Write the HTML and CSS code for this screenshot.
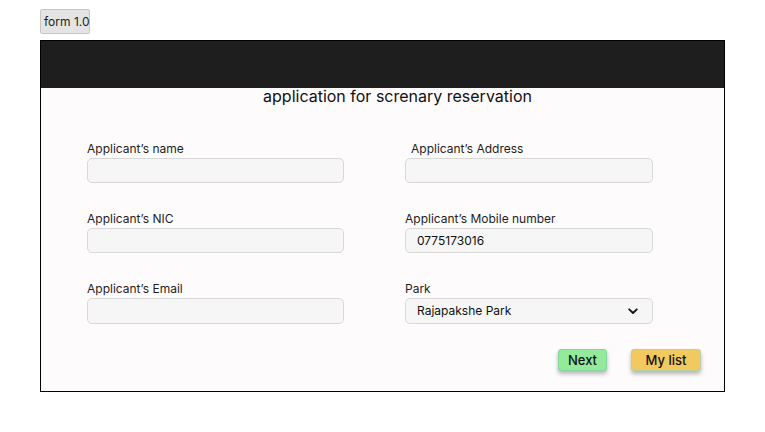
FILE: index.html
```html
<!DOCTYPE html>
<html>
<head>
<meta charset="utf-8">
<link rel="stylesheet" href="styles.css">
</head>
<body>
<div class="page">
  <div class="badge">form 1.0</div>
  <div class="frame">
    <div class="header"></div>
    <h1 class="title">application for screnary reservation</h1>
    <div class="grid">
      <div class="field">
        <label class="label">Applicant’s name</label>
        <div class="input"></div>
      </div>
      <div class="field">
        <label class="label indent">Applicant’s Address</label>
        <div class="input"></div>
      </div>
      <div class="field">
        <label class="label">Applicant’s NIC</label>
        <div class="input"></div>
      </div>
      <div class="field">
        <label class="label">Applicant’s Mobile number</label>
        <div class="input">0775173016</div>
      </div>
      <div class="field">
        <label class="label">Applicant’s Email</label>
        <div class="input tall"></div>
      </div>
      <div class="field">
        <label class="label">Park</label>
        <div class="input select tall">
          <span>Rajapakshe Park</span>
          <svg class="chev" width="10" height="7" viewBox="0 0 10 7"><path d="M1.2 1.3 L5 5 L8.8 1.3" fill="none" stroke="#111" stroke-width="1.8" stroke-linecap="round" stroke-linejoin="round"/></svg>
        </div>
      </div>
    </div>
    <div class="actions">
      <button class="btn next">Next</button>
      <button class="btn mylist">My list</button>
    </div>
  </div>
</div>
</body>
</html>
```
FILE: styles.css
```css
* { box-sizing: border-box; }
html, body { margin: 0; padding: 0; background: #ffffff; }
body { font-family: Inter, "Noto Sans", sans-serif; color: #1e1e1e; }
.page { padding: 9px 0 0 40px; }
.badge {
  width: 50px; height: 25px;
  background: #e4e4e4; border: 1px solid #c6c6c6; border-radius: 2px;
  font-size: 12px; line-height: 23px; padding-left: 3px; color: #1e1e1e;
  white-space: nowrap;
}
.frame {
  margin-top: 6px;
  width: 685px; height: 352px;
  border: 1px solid #000;
  background: #fdfbfc;
  display: flex; flex-direction: column;
}
.header { height: 47px; background: #1e1e1e; flex: none; }
.title {
  margin: 0; padding-left: 30px;
  font-size: 16px; line-height: 16px; font-weight: 400;
  text-align: center; color: #111;
}
.grid {
  margin-top: 38px;
  padding-left: 46px;
  display: grid;
  grid-template-columns: 257px 248px;
  column-gap: 61px;
  row-gap: 29px;
}
.label { display: block; font-size: 12px; line-height: 14px; margin-bottom: 2px; }
.label.indent { padding-left: 6px; }
.input {
  height: 25px;
  background: #f7f6f6;
  border: 1px solid #d9d8d8;
  border-radius: 5px;
  font-size: 12px; line-height: 23px;
  padding-left: 11px; color: #111;
}
.input.tall { height: 26px; line-height: 24px; }
.select { display: flex; align-items: center; justify-content: space-between; padding-right: 14px; }
.chev { display: block; }
.actions {
  margin-top: 25px;
  display: flex; justify-content: flex-end; gap: 24px;
  padding-right: 23px;
}
.btn {
  height: 22px; border-radius: 3px;
  font-family: Inter, "Noto Sans", sans-serif;
  font-size: 13px; font-weight: 500; color: #111;
  box-shadow: 0 3px 4px rgba(0,0,0,0.28);
  padding: 0; cursor: pointer;
}
.next { width: 49px; background: #93ea9a; border: 1px solid #86d5a0; }
.mylist { width: 70px; background: #f2c95e; border: 1px solid #b9cfa6; }
```
